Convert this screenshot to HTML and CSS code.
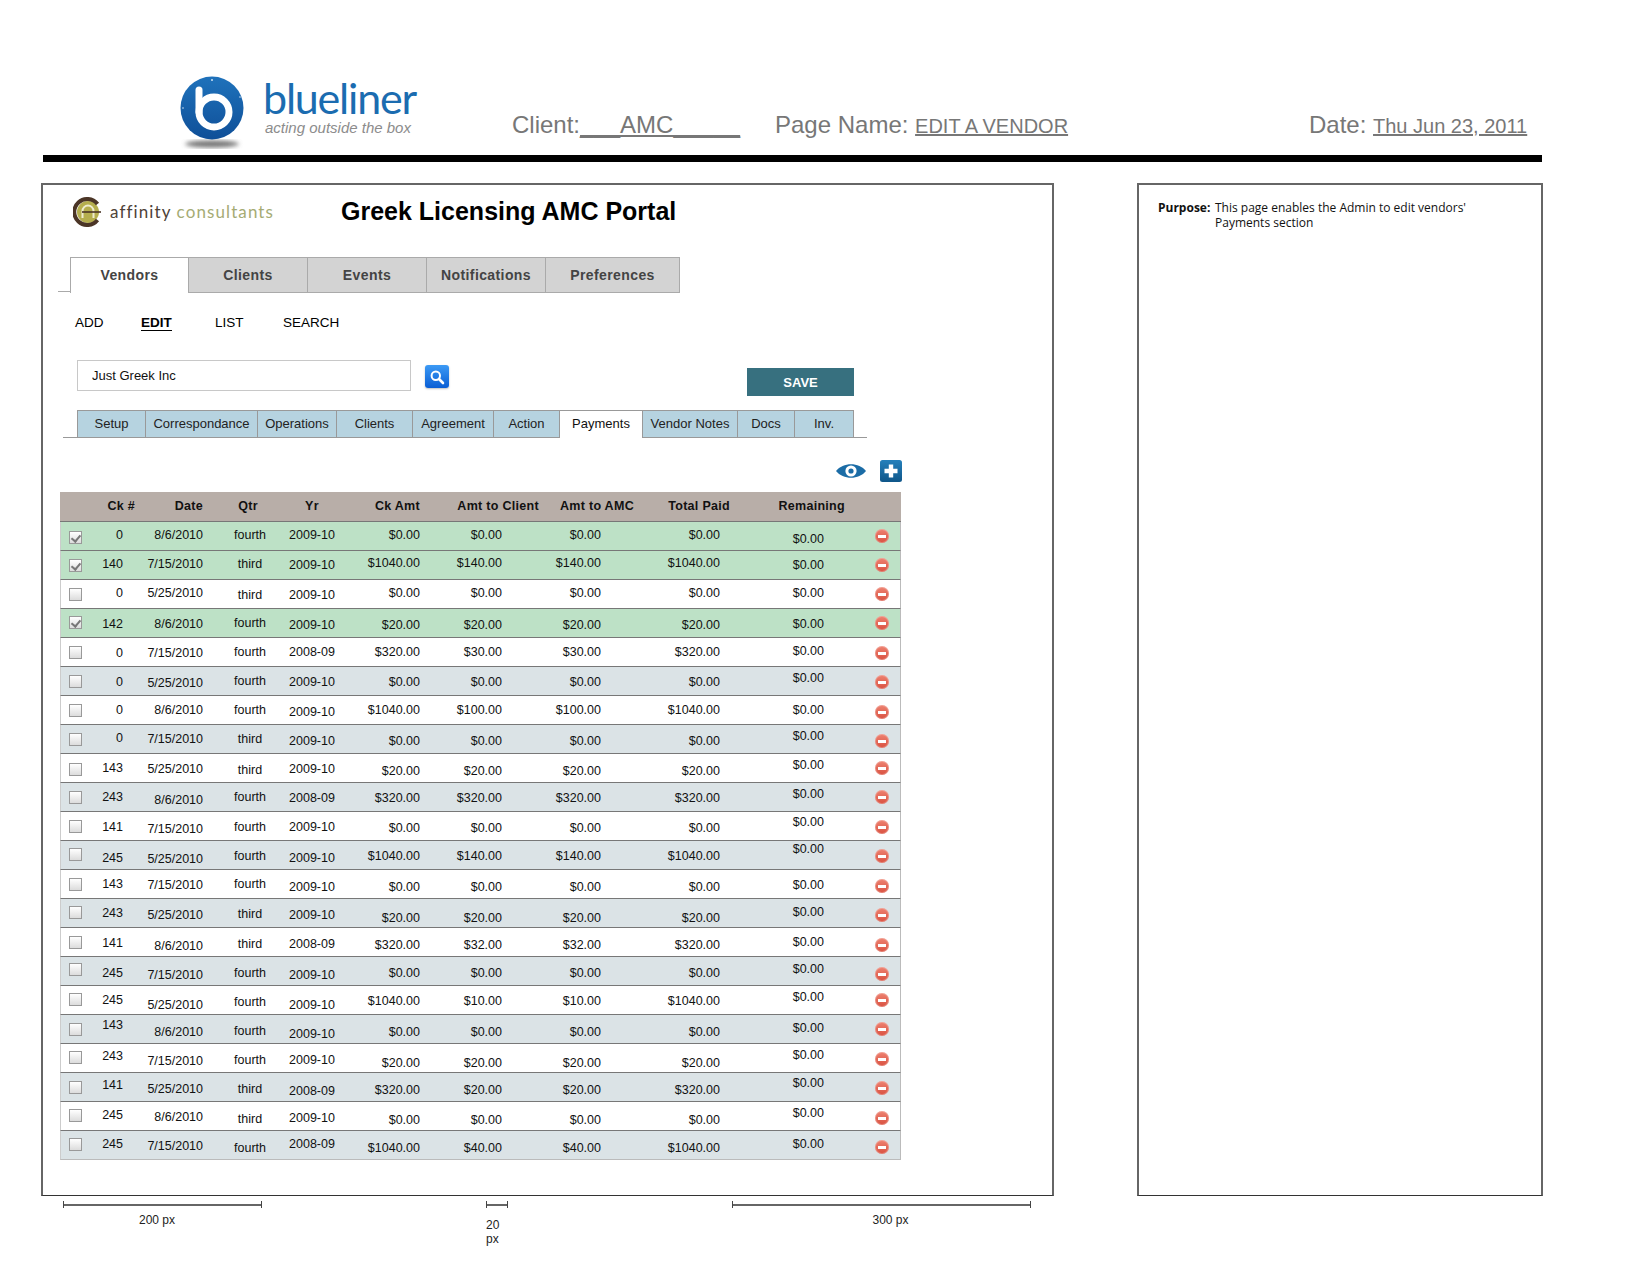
FILE: index.html
```html
<!DOCTYPE html>
<html lang="en">
<head>
  <meta charset="UTF-8">
  <meta name="viewport" content="width=device-width, initial-scale=1.0">
  <title>Edit a Vendor</title>
  <link rel="stylesheet" href="styles.css">
</head>
<body>

  <header class="sheet-head">
    <div class="blueliner">
      <svg class="blueliner-mark" width="70" height="76" viewBox="0 0 70 76">
        <defs>
          <linearGradient id="ball" x1="0" y1="0" x2="0" y2="1">
            <stop offset="0" stop-color="#1f72bb"/>
            <stop offset="1" stop-color="#0f4f98"/>
          </linearGradient>
          <filter id="soft"><feGaussianBlur stdDeviation="2"/></filter>
        </defs>
        <ellipse cx="32" cy="68" rx="27" ry="3.5" fill="#777" filter="url(#soft)"/>
        <circle cx="32" cy="32" r="31.5" fill="url(#ball)"/>
        <circle cx="34" cy="36" r="15" fill="none" stroke="#fff" stroke-width="7"/>
        <path d="M19 14V36" fill="none" stroke="#fff" stroke-width="7" stroke-linecap="round"/>
        <circle cx="32" cy="4" r="1" fill="#cfe2f3"/>
        <circle cx="3" cy="32" r="0.8" fill="#cfe2f3"/>
        <circle cx="60" cy="21" r="0.8" fill="#cfe2f3"/>
      </svg>
      <div class="blueliner-words">
        <div class="blueliner-name">blueliner</div>
        <div class="blueliner-tag">acting outside the box</div>
      </div>
    </div>
    <div class="meta meta-client">Client:<u>___AMC_____</u></div>
    <div class="meta meta-page">Page Name: <u class="meta-value">EDIT A VENDOR</u></div>
    <div class="meta meta-date">Date: <u class="meta-value">Thu Jun 23, 2011</u></div>
  </header>

  <div class="boards">
    <main class="board">
      <div class="brand">
        <svg class="affinity-mark" width="30" height="30" viewBox="0 0 30 30">
          <circle cx="15" cy="15" r="11" fill="#b5ae4e"/>
          <path d="M24.5 7A13 13 0 1 0 24.5 23" fill="none" stroke="#4b3526" stroke-width="4"/>
          <path d="M9.5 21V14A5.5 5.5 0 0 1 20.5 14V21" fill="none" stroke="#efeccf" stroke-width="2"/>
          <path d="M9 15H28" stroke="#4b3526" stroke-width="1.6"/>
        </svg>
        <div class="affinity-name">affinity <span class="affinity-light">consultants</span></div>
        <h1 class="portal-title">Greek Licensing AMC Portal</h1>
      </div>

      <nav class="tabs">
        <a class="tab active">Vendors</a>
        <a class="tab">Clients</a>
        <a class="tab">Events</a>
        <a class="tab">Notifications</a>
        <a class="tab wide">Preferences</a>
      </nav>

      <nav class="subnav">
        <a>ADD</a>
        <a class="current">EDIT</a>
        <a>LIST</a>
        <a>SEARCH</a>
      </nav>

      <div class="finder">
        <input class="vendor-input" type="text" value="Just Greek Inc">
        <button class="search-btn" type="button">
          <svg width="16" height="16" viewBox="0 0 16 16">
            <circle cx="6.8" cy="6.8" r="4.2" fill="none" stroke="#fff" stroke-width="2"/>
            <path d="M10 10L14 14" stroke="#fff" stroke-width="2.6" stroke-linecap="round"/>
          </svg>
        </button>
        <button class="save-btn" type="button">SAVE</button>
      </div>

      <nav class="subtabs">
        <a class="subtab w-setup">Setup</a>
        <a class="subtab w-corr">Correspondance</a>
        <a class="subtab w-oper">Operations</a>
        <a class="subtab w-clients">Clients</a>
        <a class="subtab w-agree">Agreement</a>
        <a class="subtab w-action">Action</a>
        <a class="subtab w-pay active">Payments</a>
        <a class="subtab w-notes">Vendor Notes</a>
        <a class="subtab w-docs">Docs</a>
        <a class="subtab w-inv">Inv.</a>
      </nav>

      <div class="tools">
        <svg width="30" height="20" viewBox="0 0 30 20">
          <path d="M0 10C7 1 23 1 30 10C23 19 7 19 0 10Z" fill="#1b6ca6"/>
          <circle cx="15" cy="10" r="5.6" fill="#fff"/>
          <circle cx="15" cy="10" r="2.6" fill="#1b6ca6"/>
        </svg>
        <svg width="22" height="22" viewBox="0 0 22 22">
          <defs>
            <linearGradient id="plusbg" x1="0" y1="0" x2="0" y2="1">
              <stop offset="0" stop-color="#2580bb"/>
              <stop offset="1" stop-color="#0f5689"/>
            </linearGradient>
          </defs>
          <rect width="22" height="22" rx="2.5" fill="url(#plusbg)"/>
          <path d="M11 4.5V17.5M4.5 11H17.5" stroke="#fff" stroke-width="4.4"/>
        </svg>
      </div>

      <table class="payments">
        <thead>
          <tr><th></th><th>Ck #</th><th>Date</th><th>Qtr</th><th>Yr</th><th>Ck Amt</th><th>Amt to Client</th><th>Amt to AMC</th><th>Total Paid</th><th>Remaining</th><th></th></tr>
        </thead>
        <tbody>
          <tr class="paid"><td class="d1"><input class="check" type="checkbox" checked></td><td class="u1">0</td><td class="u1">8/6/2010</td><td class="u1">fourth</td><td class="u1">2009-10</td><td class="u1">$0.00</td><td class="u1">$0.00</td><td class="u1">$0.00</td><td class="u1">$0.00</td><td class="d3">$0.00</td><td><span class="del"></span></td></tr>
          <tr class="paid"><td><input class="check" type="checkbox" checked></td><td class="u1">140</td><td class="u1">7/15/2010</td><td class="u1">third</td><td>2009-10</td><td class="u2">$1040.00</td><td class="u2">$140.00</td><td class="u2">$140.00</td><td class="u2">$1040.00</td><td>$0.00</td><td><span class="del"></span></td></tr>
          <tr><td><input class="check" type="checkbox"></td><td class="u1">0</td><td class="u1">5/25/2010</td><td class="d1">third</td><td class="d1">2009-10</td><td class="u1">$0.00</td><td class="u1">$0.00</td><td class="u1">$0.00</td><td class="u1">$0.00</td><td class="u1">$0.00</td><td><span class="del"></span></td></tr>
          <tr class="paid"><td class="u1"><input class="check" type="checkbox" checked></td><td class="d1">142</td><td class="d1">8/6/2010</td><td>fourth</td><td class="d2">2009-10</td><td class="d2">$20.00</td><td class="d2">$20.00</td><td class="d2">$20.00</td><td class="d2">$20.00</td><td class="d1">$0.00</td><td><span class="del"></span></td></tr>
          <tr><td><input class="check" type="checkbox"></td><td class="d1">0</td><td class="d1">7/15/2010</td><td>fourth</td><td>2008-09</td><td>$320.00</td><td>$30.00</td><td>$30.00</td><td>$320.00</td><td class="u1">$0.00</td><td class="d1"><span class="del"></span></td></tr>
          <tr class="alt"><td><input class="check" type="checkbox"></td><td class="d1">0</td><td class="d2">5/25/2010</td><td>fourth</td><td class="d1">2009-10</td><td class="d1">$0.00</td><td class="d1">$0.00</td><td class="d1">$0.00</td><td class="d1">$0.00</td><td class="u3">$0.00</td><td class="d1"><span class="del"></span></td></tr>
          <tr><td><input class="check" type="checkbox"></td><td>0</td><td>8/6/2010</td><td>fourth</td><td class="d2">2009-10</td><td>$1040.00</td><td>$100.00</td><td>$100.00</td><td>$1040.00</td><td>$0.00</td><td class="d2"><span class="del"></span></td></tr>
          <tr class="alt"><td><input class="check" type="checkbox"></td><td class="u1">0</td><td>7/15/2010</td><td>third</td><td class="d2">2009-10</td><td class="d2">$0.00</td><td class="d2">$0.00</td><td class="d2">$0.00</td><td class="d2">$0.00</td><td class="u3">$0.00</td><td class="d2"><span class="del"></span></td></tr>
          <tr><td class="d1"><input class="check" type="checkbox"></td><td>143</td><td class="d1">5/25/2010</td><td class="d2">third</td><td class="d1">2009-10</td><td class="d3">$20.00</td><td class="d3">$20.00</td><td class="d3">$20.00</td><td class="d3">$20.00</td><td class="u3">$0.00</td><td><span class="del"></span></td></tr>
          <tr class="alt"><td><input class="check" type="checkbox"></td><td>243</td><td class="d3">8/6/2010</td><td>fourth</td><td class="d1">2008-09</td><td class="d1">$320.00</td><td class="d1">$320.00</td><td class="d1">$320.00</td><td class="d1">$320.00</td><td class="u3">$0.00</td><td><span class="del"></span></td></tr>
          <tr><td><input class="check" type="checkbox"></td><td class="d1">141</td><td class="d3">7/15/2010</td><td class="d1">fourth</td><td class="d1">2009-10</td><td class="d2">$0.00</td><td class="d2">$0.00</td><td class="d2">$0.00</td><td class="d2">$0.00</td><td class="u4">$0.00</td><td class="d1"><span class="del"></span></td></tr>
          <tr class="alt"><td class="u1"><input class="check" type="checkbox"></td><td class="d3">245</td><td class="d4">5/25/2010</td><td class="d1">fourth</td><td class="d3">2009-10</td><td class="d1">$1040.00</td><td class="d1">$140.00</td><td class="d1">$140.00</td><td class="d1">$1040.00</td><td class="u6">$0.00</td><td class="d1"><span class="del"></span></td></tr>
          <tr><td><input class="check" type="checkbox"></td><td>143</td><td class="d1">7/15/2010</td><td>fourth</td><td class="d3">2009-10</td><td class="d3">$0.00</td><td class="d3">$0.00</td><td class="d3">$0.00</td><td class="d3">$0.00</td><td class="d1">$0.00</td><td class="d2"><span class="del"></span></td></tr>
          <tr class="alt"><td class="u1"><input class="check" type="checkbox"></td><td>243</td><td class="d2">5/25/2010</td><td class="d1">third</td><td class="d2">2009-10</td><td class="d5">$20.00</td><td class="d5">$20.00</td><td class="d5">$20.00</td><td class="d5">$20.00</td><td class="u1">$0.00</td><td class="d2"><span class="del"></span></td></tr>
          <tr><td><input class="check" type="checkbox"></td><td class="d1">141</td><td class="d4">8/6/2010</td><td class="d2">third</td><td class="d2">2008-09</td><td class="d3">$320.00</td><td class="d3">$32.00</td><td class="d3">$32.00</td><td class="d3">$320.00</td><td>$0.00</td><td class="d3"><span class="del"></span></td></tr>
          <tr class="alt"><td class="u2"><input class="check" type="checkbox"></td><td class="d2">245</td><td class="d4">7/15/2010</td><td class="d2">fourth</td><td class="d4">2009-10</td><td class="d2">$0.00</td><td class="d2">$0.00</td><td class="d2">$0.00</td><td class="d2">$0.00</td><td class="u2">$0.00</td><td class="d3"><span class="del"></span></td></tr>
          <tr><td class="u1"><input class="check" type="checkbox"></td><td>245</td><td class="d5">5/25/2010</td><td class="d2">fourth</td><td class="d5">2009-10</td><td class="d1">$1040.00</td><td class="d1">$10.00</td><td class="d1">$10.00</td><td class="d1">$1040.00</td><td class="u3">$0.00</td><td><span class="del"></span></td></tr>
          <tr class="alt"><td><input class="check" type="checkbox"></td><td class="u4">143</td><td class="d3">8/6/2010</td><td class="d2">fourth</td><td class="d5">2009-10</td><td class="d3">$0.00</td><td class="d3">$0.00</td><td class="d3">$0.00</td><td class="d3">$0.00</td><td class="u1">$0.00</td><td><span class="del"></span></td></tr>
          <tr><td class="u1"><input class="check" type="checkbox"></td><td class="u2">243</td><td class="d3">7/15/2010</td><td class="d2">fourth</td><td class="d2">2009-10</td><td class="d5">$20.00</td><td class="d5">$20.00</td><td class="d5">$20.00</td><td class="d5">$20.00</td><td class="u3">$0.00</td><td class="d1"><span class="del"></span></td></tr>
          <tr class="alt"><td><input class="check" type="checkbox"></td><td class="u2">141</td><td class="d2">5/25/2010</td><td class="d2">third</td><td class="d4">2008-09</td><td class="d3">$320.00</td><td class="d3">$20.00</td><td class="d3">$20.00</td><td class="d3">$320.00</td><td class="u4">$0.00</td><td class="d1"><span class="del"></span></td></tr>
          <tr><td class="u1"><input class="check" type="checkbox"></td><td class="u1">245</td><td class="d1">8/6/2010</td><td class="d3">third</td><td class="d2">2009-10</td><td class="d4">$0.00</td><td class="d4">$0.00</td><td class="d4">$0.00</td><td class="d4">$0.00</td><td class="u3">$0.00</td><td class="d2"><span class="del"></span></td></tr>
          <tr class="alt"><td class="u1"><input class="check" type="checkbox"></td><td class="u1">245</td><td class="d1">7/15/2010</td><td class="d3">fourth</td><td class="u1">2008-09</td><td class="d3">$1040.00</td><td class="d3">$40.00</td><td class="d3">$40.00</td><td class="d3">$1040.00</td><td class="u1">$0.00</td><td class="d2"><span class="del"></span></td></tr>
        </tbody>
      </table>
    </main>

    <aside class="notes">
      <div class="purpose">
        <strong class="purpose-label">Purpose:</strong>
        <p class="purpose-text">This page enables the Admin to edit vendors' Payments section</p>
      </div>
    </aside>
  </div>

  <div class="dims">
    <div class="dim dim-200"><div class="dim-line"></div><div class="dim-label">200 px</div></div>
    <div class="dim dim-20"><div class="dim-line"></div><div class="dim-label">20 px</div></div>
    <div class="dim dim-300"><div class="dim-line"></div><div class="dim-label">300 px</div></div>
  </div>

</body>
</html>
```

FILE: styles.css
```css
* {
  box-sizing: border-box;
}

body {
  margin: 0;
  background-color: #fff;
  font-family: "Liberation Sans", Arial, sans-serif;
  color: #000;
}

/* sheet header */
.sheet-head {
  display: flex;
  height: 162px;
  margin-left: 43px;
  width: 1499px;
  padding-left: 137px;
  border-bottom: 7px solid #000;
}

.blueliner {
  display: flex;
  width: 332px;
  padding-top: 76px;
}

.blueliner-mark {
  flex: none;
  margin-right: 13px;
}

.blueliner-words {
  padding-top: 4px;
}

.blueliner-name {
  font-family: Lato, sans-serif;
  font-size: 43px;
  line-height: 36px;
  letter-spacing: -1.2px;
  color: #1b6cb0;
}

.blueliner-tag {
  margin: 3px 0 0 2px;
  font-size: 15px;
  line-height: 17px;
  font-style: italic;
  white-space: nowrap;
  color: #8c8c8c;
}

.meta {
  padding-top: 111px;
  font-size: 24px;
  line-height: 28px;
  white-space: nowrap;
  color: #777;
}

.meta-value {
  font-size: 20px;
}

.meta-client {
  width: 263px;
}

.meta-page {
  width: 534px;
}

/* the two boards */
.boards {
  display: flex;
  margin: 21px 0 0 41px;
}

.board {
  width: 1013px;
  height: 1013px;
  border: 2px solid #666;
  border-bottom: 1px solid #333;
}

.notes {
  width: 406px;
  height: 1013px;
  margin-left: 83px;
  padding: 15px 19px;
  border: 2px solid #666;
  border-bottom: 1px solid #333;
}

.purpose {
  display: flex;
  font-family: "Open Sans", sans-serif;
  font-size: 12px;
  line-height: 15px;
  color: #111;
}

.purpose-label {
  flex: none;
  width: 57px;
}

.purpose-text {
  margin: 0;
  width: 262px;
}

/* brand row */
.brand {
  display: flex;
  align-items: center;
  height: 31px;
  margin-top: 11px;
  padding-left: 30px;
}

.affinity-mark {
  flex: none;
  margin-right: 7px;
}

.affinity-name {
  width: 231px;
  font-family: Lato, sans-serif;
  font-size: 17px;
  letter-spacing: 1.1px;
  white-space: nowrap;
  color: #4d4238;
}

.affinity-light {
  color: #a5ab74;
}

.portal-title {
  margin: 0;
  font-size: 25px;
  line-height: 31px;
  white-space: nowrap;
}

/* main tabs */
.tabs {
  display: flex;
  margin: 30px 0 0 15px;
}

.tabs::before {
  content: "";
  width: 12px;
  border-bottom: 1px solid #aaa;
  margin-bottom: 1px;
}

.tab {
  width: 119px;
  height: 36px;
  border: 1px solid #aaa;
  border-left: 0;
  background-color: #d3d3d3;
  font-size: 14px;
  font-weight: bold;
  line-height: 34px;
  letter-spacing: 0.4px;
  text-align: center;
  color: #444;
}

.tab.active {
  border-left: 1px solid #aaa;
  border-bottom: 0;
  background-color: #fff;
}

.tab.wide {
  width: 134px;
}

/* add / edit / list / search */
.subnav {
  display: grid;
  grid-template-columns: 66px 74px 68px auto;
  margin: 22px 0 0 32px;
  font-size: 13.5px;
  line-height: 16px;
}

.subnav .current {
  justify-self: start;
  font-weight: bold;
  border-bottom: 1px solid #000;
  line-height: 15px;
}

/* vendor search row */
.finder {
  display: flex;
  align-items: flex-start;
  margin: 29px 0 0 34px;
}

.vendor-input {
  width: 334px;
  height: 31px;
  padding: 0 14px;
  border: 1px solid #c8c8c8;
  font-family: inherit;
  font-size: 13px;
  color: #111;
}

.search-btn {
  display: flex;
  align-items: center;
  justify-content: center;
  width: 24px;
  height: 23px;
  margin: 5px 0 0 14px;
  padding: 0;
  border: 0;
  border-radius: 3px;
  background: linear-gradient(#3c9af5, #0a5ed4);
  box-shadow: 0 1px 2px rgba(0, 0, 0, 0.25);
}

.save-btn {
  width: 107px;
  height: 28px;
  margin: 8px 0 0 298px;
  border: 0;
  background-color: #37707f;
  font-family: inherit;
  font-size: 13px;
  font-weight: bold;
  color: #fff;
}

/* payment sub tabs */
.subtabs {
  display: flex;
  width: 804px;
  margin: 14px 0 0 20px;
  padding: 0 13px 0 14px;
  border-bottom: 1px solid #999;
}

.subtab {
  height: 27px;
  border: 1px solid #999;
  border-left: 0;
  border-bottom: 0;
  background-color: #b6d3e0;
  font-size: 13px;
  line-height: 26px;
  text-align: center;
  color: #222;
}

.subtab:first-child {
  border-left: 1px solid #999;
}

.subtab.active {
  margin-bottom: -1px;
  height: 28px;
  background-color: #fff;
  color: #111;
}

.w-setup { width: 69px; }
.w-corr { width: 112px; }
.w-oper { width: 79px; }
.w-clients { width: 76px; }
.w-agree { width: 81px; }
.w-action { width: 66px; }
.w-pay { width: 83px; }
.w-notes { width: 95px; }
.w-docs { width: 57px; }
.w-inv { width: 59px; }

.tools {
  display: flex;
  align-items: center;
  justify-content: flex-end;
  gap: 14px;
  width: 859px;
  height: 22px;
  margin-top: 22px;
}

/* payments table */
.payments {
  width: 841px;
  margin: 10px 0 0 17px;
  table-layout: fixed;
  border-collapse: separate;
  border-spacing: 0;
  font-size: 12.5px;
  line-height: 15px;
  color: #111;
}

.payments th {
  height: 30px;
  padding: 0;
  border-bottom: 1px solid #777;
  background-color: #b8aea8;
  font-size: 12.5px;
  letter-spacing: 0.3px;
  text-align: right;
  color: #111;
}

.payments tbody tr {
  height: 29px;
}

.payments td {
  padding: 0;
  border-bottom: 1px solid #777;
  text-align: right;
  vertical-align: middle;
  white-space: nowrap;
}

.payments tbody tr:last-child td {
  border-bottom-color: #bbb;
}

.payments td:first-child {
  border-left: 1px solid #ccc;
}

.payments td:last-child {
  border-right: 1px solid #bbb;
}

.paid td {
  background-color: #bde1c6;
}

.alt td {
  background-color: #dbe3e6;
}

/* column widths and where each column's text sits */
.payments th:nth-child(1) { width: 30px; }
.payments th:nth-child(2) { width: 45px; }
.payments th:nth-child(3) { width: 68px; }
.payments th:nth-child(4) { width: 80px; padding-left: 10px; text-align: center; }
.payments th:nth-child(5) { width: 58px; text-align: center; }
.payments th:nth-child(6) { width: 79px; }
.payments th:nth-child(7) { width: 119px; }
.payments th:nth-child(8) { width: 95px; }
.payments th:nth-child(9) { width: 96px; }
.payments th:nth-child(10) { width: 115px; }
.payments th:nth-child(11) { width: 56px; }

.payments td:nth-child(1) { padding-left: 8px; text-align: left; }
.payments td:nth-child(2) { padding-right: 12px; }
.payments td:nth-child(4) { padding-left: 14px; text-align: center; }
.payments td:nth-child(5) { text-align: center; }
.payments td:nth-child(7) { padding-right: 37px; }
.payments td:nth-child(8) { padding-right: 33px; }
.payments td:nth-child(9) { padding-right: 10px; }
.payments td:nth-child(10) { padding-right: 21px; }
.payments td:nth-child(11) { padding-left: 30px; text-align: left; }

/* the mockup's cells don't sit on one line, these nudge a cell up or down */
.payments td.u1 { padding-bottom: 2px; }
.payments td.u2 { padding-bottom: 4px; }
.payments td.u3 { padding-bottom: 6px; }
.payments td.u4 { padding-bottom: 8px; }
.payments td.u6 { padding-bottom: 12px; }
.payments td.d1 { padding-top: 2px; }
.payments td.d2 { padding-top: 4px; }
.payments td.d3 { padding-top: 6px; }
.payments td.d4 { padding-top: 8px; }
.payments td.d5 { padding-top: 10px; }

.check {
  appearance: none;
  position: relative;
  display: block;
  width: 13px;
  height: 13px;
  margin: 0;
  border: 1px solid #999;
  background: linear-gradient(#fff, #dcdcdc);
}

.check:checked::after {
  content: "";
  position: absolute;
  left: 3px;
  top: 1px;
  width: 4px;
  height: 7px;
  border: solid #777;
  border-width: 0 2px 2px 0;
  transform: rotate(40deg);
}

.del {
  display: flex;
  align-items: center;
  justify-content: center;
  width: 14px;
  height: 14px;
  border-radius: 50%;
  background: linear-gradient(#ee8372, #d9503f);
  box-shadow: inset 0 0 0 1px rgba(255, 255, 255, 0.25);
}

.del::after {
  content: "";
  width: 8px;
  height: 3px;
  background-color: #fff;
}

/* measurement marks under the board */
.dims {
  display: flex;
  margin: 5px 0 0 63px;
}

.dim {
  display: flex;
  flex-direction: column;
  align-items: center;
  font-size: 12px;
  line-height: 14px;
  color: #222;
}

.dim-line {
  align-self: stretch;
  height: 7px;
  border-left: 1px solid #444;
  border-right: 1px solid #444;
  background: linear-gradient(#666, #666) center / 100% 2px no-repeat;
}

.dim-label {
  margin-top: 5px;
}

.dim-200 {
  width: 199px;
  padding-right: 0;
}

.dim-200 .dim-label {
  margin-right: 11px;
}

.dim-20 {
  width: 22px;
  margin-left: 224px;
}

.dim-20 .dim-label {
  margin-top: 10px;
}

.dim-300 {
  width: 299px;
  margin-left: 224px;
}

.dim-300 .dim-label {
  margin-left: 18px;
}
```
